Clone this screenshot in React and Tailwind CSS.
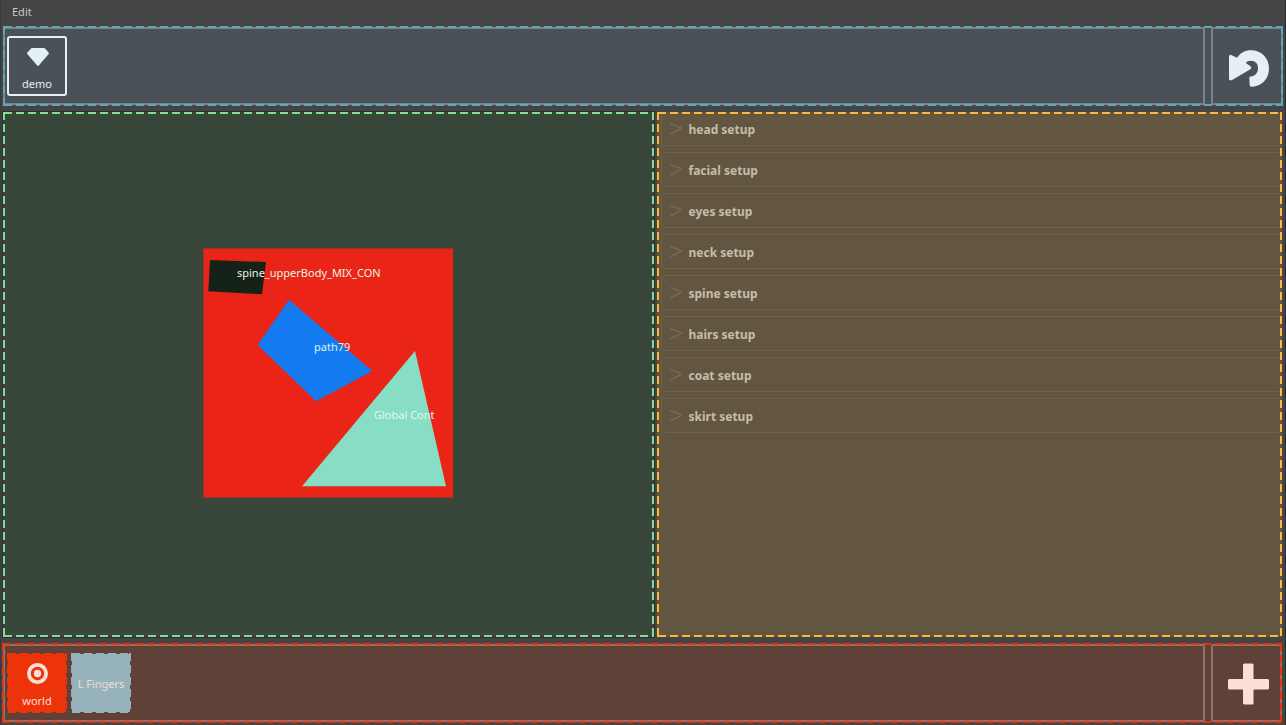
import React from "react";

const groups = [
  "head setup",
  "facial setup",
  "eyes setup",
  "neck setup",
  "spine setup",
  "hairs setup",
  "coat setup",
  "skirt setup",
];

// Dashed outline (8px dash, 4px gap) laid over a panel, in the current text colour.
function DashFrame({ className = "" }) {
  const across =
    "absolute inset-x-0 h-0.5 bg-[repeating-linear-gradient(90deg,currentColor_0_8px,transparent_8px_12px)] bg-[position:1px_0]";
  const down =
    "absolute inset-y-0 w-0.5 bg-[repeating-linear-gradient(180deg,currentColor_0_8px,transparent_8px_12px)]";
  return (
    <span aria-hidden="true" className={"pointer-events-none absolute inset-0 " + className}>
      <span className={across + " top-0"} />
      <span className={across + " bottom-0"} />
      <span className={down + " left-0"} />
      <span className={down + " right-0"} />
    </span>
  );
}

function DiamondIcon() {
  return (
    <svg width="22" height="18" viewBox="0 0 22 18" fill="currentColor" aria-hidden="true">
      <path d="M5 0H17Q17.6 0 18 .5L21.6 4.6Q22.2 5.3 21.7 6L11.8 17.5Q11 18.3 10.2 17.5L.3 6Q-.2 5.3.4 4.6L4 .5Q4.4 0 5 0Z" />
    </svg>
  );
}

function UndoIcon() {
  return (
    <svg width="40" height="37" viewBox="0 0 120 110" fill="currentColor" aria-hidden="true">
      <path d="M0 19Q0 12 8 15L24 23C34 8 48 0 66 0C98 0 120 24 120 55C120 86 98 109 68 110Q63 110 62 105L61 82Q61 79 65 79C78 77 87 68 87 54C87 41 79 32 66 32C59 32 54 34 50 38L64 48Q70 53 64 57L8 90Q0 92 0 86Z" />
    </svg>
  );
}

function TargetIcon() {
  return (
    <svg width="22" height="22" viewBox="0 0 22 22" aria-hidden="true">
      <circle cx="11.5" cy="11.5" r="8.6" fill="none" stroke="currentColor" strokeWidth="3.8" />
      <circle cx="11.5" cy="11.5" r="3.7" fill="currentColor" />
    </svg>
  );
}

function PlusIcon() {
  return (
    <svg width="42" height="42" viewBox="0 0 42 42" fill="currentColor" aria-hidden="true">
      <rect x="15" y="0.5" width="10.5" height="41" rx="1.5" />
      <rect x="0" y="16" width="41" height="10.5" rx="1.5" />
    </svg>
  );
}

function Picker() {
  return (
    <svg width="250" height="250" viewBox="0 0 250 250" role="img" aria-label="Picker shapes">
      <rect x="0.5" y="0.5" width="249.5" height="249" fill="#ea2517" />
      <polygon points="7,12 63,14 59,46.3 5.3,43.3" fill="#152217" />
      <polygon points="86,51.7 169.3,123 113,153.3 54.7,97" fill="#137aef" />
      <polygon points="212,103 243,238.3 99,238.3" fill="#87dec5" />
      <g fontSize="11" fontFamily="'Noto Sans', sans-serif">
        <text x="34" y="29" fill="#e8f5e4">spine_upperBody_MIX_CON</text>
        <text x="111" y="103" fill="#dcf5f0">path79</text>
        <text x="171" y="171" fill="#e2f8ec">Global Cont</text>
      </g>
    </svg>
  );
}

export default function App() {
  return (
    <div className="flex h-screen flex-col border-x border-l-[#3a3a3a] border-r-[#2c2c2c] bg-[#444444] pb-0.5 font-['Noto_Sans',sans-serif] text-[11px]">
      <nav className="flex h-[26px] shrink-0 items-center px-[11px] pb-0.5 text-[#c8c8c8]">
        <button type="button">Edit</button>
      </nav>

      <header className="relative mr-0.5 ml-0.5 flex h-20 shrink-0 gap-1.5 bg-[#4a5258] py-px text-[#e4eff6]">
        <div className="flex flex-1 items-center rounded-xs border-2 border-[#7b8487] pl-0.5">
          <button
            type="button"
            className="flex size-[60px] flex-col items-center justify-between rounded-[3px] border-2 border-[#e4eff6] pt-2.5 pb-0.5 leading-4"
          >
            <span className="pl-0.5">
              <DiamondIcon />
            </span>
            demo
          </button>
        </div>
        <button
          type="button"
          aria-label="Undo"
          className="flex w-[72px] items-center justify-center rounded-xs border-2 border-[#7b8487] pt-1 pl-1"
        >
          <UndoIcon />
        </button>
        <DashFrame className="text-[#5fa5c0]" />
      </header>

      <main className="my-1.5 mr-[3px] ml-0.5 flex min-h-0 flex-1 gap-[3px]">
        <section className="relative flex flex-[651] items-center justify-center bg-[#38473a] pr-px pb-[3px] shadow-[0_0_0_1px_#2c2c2c]">
          <Picker />
          <DashFrame className="text-[#7fe08f]" />
        </section>
        <section className="relative flex-[625] overflow-hidden bg-[#625641]">
          <div className="-mt-px -mr-px flex flex-col gap-1.5 pl-1">
            {groups.map((name) => (
              <button
                key={name}
                type="button"
                className="flex h-[35px] items-center gap-1.5 rounded-[4px] border border-[#6f634c] pl-2 text-[12px] font-bold text-[#c6bda8]"
              >
                <svg width="12" height="12" viewBox="0 0 12 12" fill="none" stroke="#766a54" strokeWidth="1.5" aria-hidden="true">
                  <path d="M0 .5L11 4.5V5.5L0 11" />
                </svg>
                <span className="pt-0.5">{name}</span>
              </button>
            ))}
          </div>
          <DashFrame className="text-[#fdb838]" />
        </section>
      </main>

      <footer className="relative mr-[3px] ml-px flex h-20 shrink-0 gap-1.5 bg-[#5f4138] py-px pl-px text-[#fddfd8]">
        <div className="flex flex-1 items-center gap-1 rounded-xs border-2 border-[#937069] pl-0.5">
          <button type="button" className="relative size-[60px] p-px text-[#ed330a]">
            <DashFrame />
            <span className="relative flex h-full flex-col items-center justify-between bg-[#ed330a] pt-2 pb-[3px] leading-4 text-[#fddfd8]">
              <TargetIcon />
              world
            </span>
          </button>
          <button type="button" className="relative size-[60px] p-px text-[#96b2ba]">
            <DashFrame />
            <span className="relative flex h-full items-center justify-center bg-[#96b2ba] pt-0.5 whitespace-nowrap text-[#f3dcd8]">
              L Fingers
            </span>
          </button>
        </div>
        <button
          type="button"
          aria-label="Add"
          className="flex w-[71px] items-center justify-center rounded-xs border-2 border-[#937069] pt-0.5 pl-1"
        >
          <PlusIcon />
        </button>
        <DashFrame className="text-[#ef310a]" />
      </footer>
    </div>
  );
}
